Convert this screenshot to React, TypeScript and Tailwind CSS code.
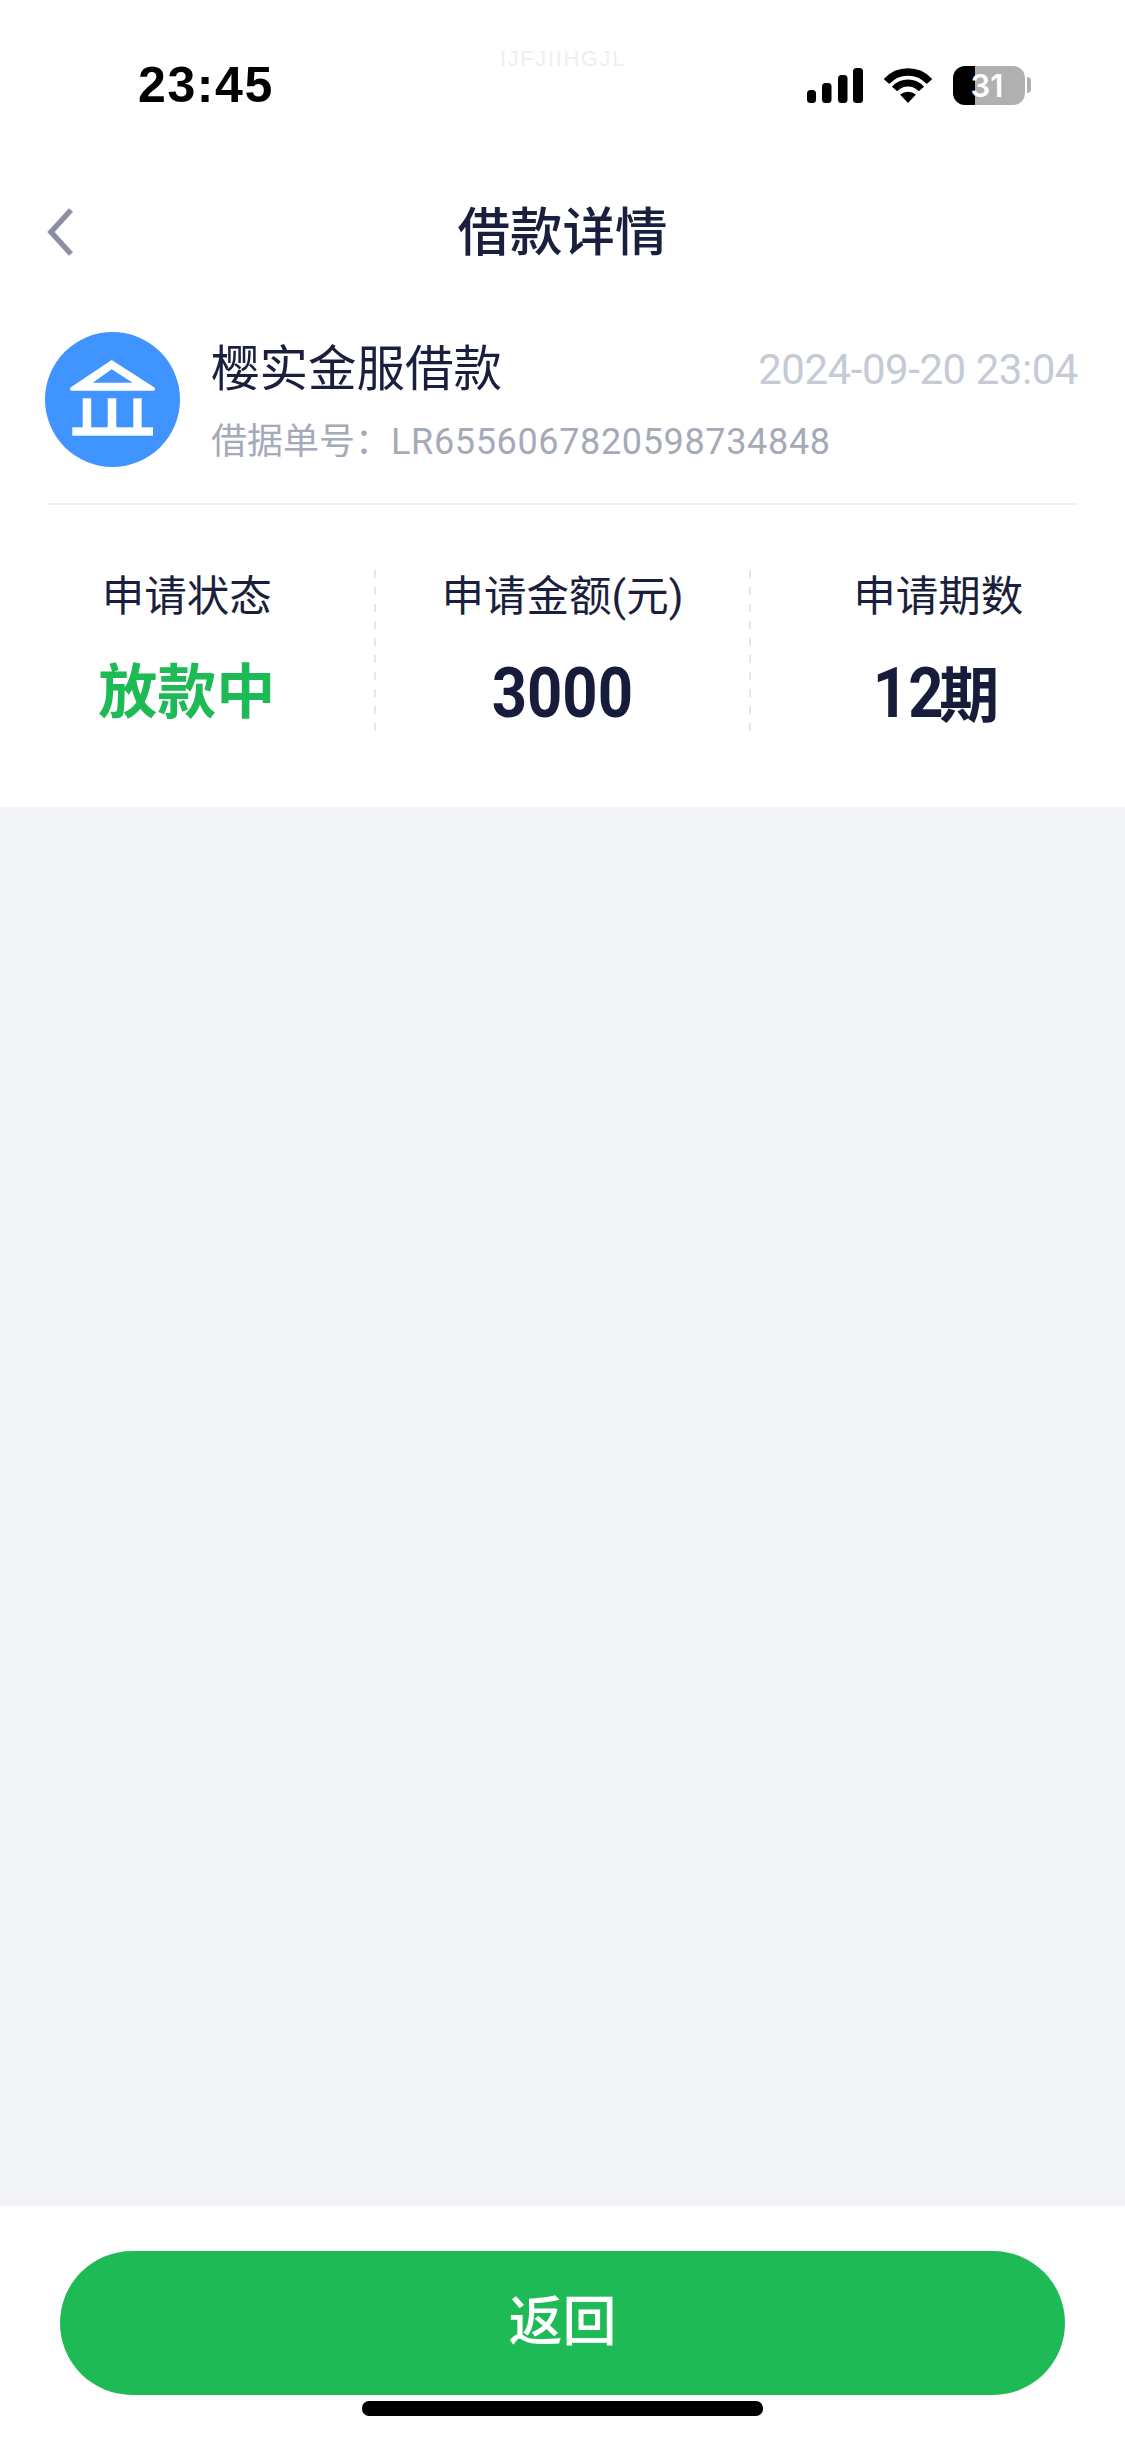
export default function App() {
  return (
    <div className="flex h-[2439px] w-[1125px] flex-col overflow-hidden bg-white font-['Roboto','Noto_Sans_CJK_SC',sans-serif] text-[#1a1f3d]">
      <div className="relative flex h-[170px] shrink-0 items-center justify-between pl-[138px] pr-[94px] text-black">
        <span className="-mt-[1px] font-['Liberation_Sans',sans-serif] text-[50px] font-bold leading-none tracking-[1.6px]">23:45</span>
        <span className="absolute left-[500px] top-[48px] font-['Liberation_Sans',sans-serif] text-[22px] leading-[22px] tracking-[1.6px] text-[#efefef]">IJFJIIHGJL</span>
        <div className="flex items-center">
          <svg width="56" height="35" viewBox="0 0 56 35" fill="#000">
            <rect x="0" y="22" width="9" height="13" rx="3.5" />
            <rect x="15" y="15" width="9.5" height="20" rx="3.5" />
            <rect x="31" y="7" width="9.5" height="28" rx="3.5" />
            <rect x="46" y="0" width="10" height="35" rx="3.5" />
          </svg>
          <svg className="ml-[21px]" width="48" height="35" viewBox="0 0 48 35" fill="none">
            <path d="M2.5 13.6A29 29 0 0 1 45.5 13.6" stroke="#000" strokeWidth="7.5" />
            <path d="M10.6 21A18 18 0 0 1 37.4 21" stroke="#000" strokeWidth="7" />
            <path d="M24 35L16 26.5Q24 21 32 26.5Z" fill="#000" />
          </svg>
          <div className="ml-[21px] flex h-[39px] w-[72px] items-center justify-center overflow-hidden rounded-[12px] bg-[linear-gradient(to_right,#000_0_22px,#b0b0b0_22px)] pr-[4px] font-['Inter',sans-serif] text-[31px] font-semibold leading-none text-white">
            31
          </div>
          <div className="ml-[2px] h-[16px] w-[4px] rounded-r-full bg-[#b0b0b0]" />
        </div>
      </div>

      <div className="grid h-[124px] shrink-0 grid-cols-[1fr_auto_1fr] items-center">
        <svg className="ml-[44px]" width="32" height="50" viewBox="0 0 32 50" fill="none">
          <path d="M27 3L7 25L27 47" stroke="#8a8fa3" strokeWidth="5.5" />
        </svg>
        <h1 className="pt-[3px] text-[52.5px] font-medium leading-none">借款详情</h1>
      </div>

      <div className="flex shrink-0 gap-[31px] pl-[45px] pr-[47px] pt-[38px]">
        <div className="h-[135px] w-[135px] shrink-0 rounded-full bg-[#4094ff]">
          <svg width="135" height="135" viewBox="0 0 135 135" fill="#fff">
            <path fillRule="evenodd" d="M66.7 28L109.5 55.5Q111 58.7 108 58.7H27Q24 58.7 25.5 55.5ZM66.7 37.3L47.7 50.7H87.7Z" />
            <rect x="37.7" y="66.3" width="8.5" height="30" />
            <rect x="62.7" y="66.3" width="8.6" height="30" />
            <rect x="88.3" y="66.3" width="8.4" height="30" />
            <rect x="27.3" y="95.3" width="80.7" height="8.4" />
          </svg>
        </div>
        <div className="min-w-0 flex-1">
          <div className="flex h-[76px] items-center justify-between">
            <span className="text-[48.5px] leading-none">樱实金服借款</span>
            <span className="text-[42px] leading-none tracking-[-0.45px] text-[#c5cad6]">2024-09-20 23:04</span>
          </div>
          <div className="h-[68px] text-[36px] leading-[68px] text-[#a5aab8]">
            借据单号：<span className="tracking-[0.65px]">LR6556067820598734848</span>
          </div>
        </div>
      </div>

      <div className="mx-[48px] mt-[27px] h-[2px] shrink-0 bg-[#eeeff2]" />

      <div className="flex h-[302px] shrink-0 items-start pt-[65px]">
        <Stat label="申请状态" valueClass="text-[59px] font-semibold text-[#1dba55]">
          放款中
        </Stat>
        <Dash />
        <Stat label="申请金额(元)" valueClass="font-bold text-[#171c3b]">
          <Narrow>3000</Narrow>
        </Stat>
        <Dash />
        <Stat label="申请期数" valueClass="pr-[9px] text-[60px] font-bold text-[#171c3b]">
          <span className="-mr-[9px]">
            <Narrow>12</Narrow>
          </span>
          期
        </Stat>
      </div>

      <div className="flex-1 bg-[#f3f4f8]" />

      <div className="h-[233px] shrink-0 bg-white pt-[45px]">
        <button className="mx-[60px] flex h-[144px] w-[1005px] items-center justify-center rounded-full bg-[#1eba56] text-[54px] font-medium leading-none text-white">
          返回
        </button>
        <div className="mx-auto mt-[6px] h-[15px] w-[401px] rounded-[7px] bg-black" />
      </div>
    </div>
  );
}

function Narrow({ children }: { children: string }) {
  return <span className="inline-block origin-center scale-x-[0.88] align-baseline text-[70px]">{children}</span>;
}

function Dash() {
  return <div className="h-[163px] w-[2px] shrink-0 bg-[repeating-linear-gradient(to_bottom,#e6e7eb_0_8px,transparent_8px_17px)]" />;
}

function Stat({ label, valueClass, children }: { label: string; valueClass: string; children: React.ReactNode }) {
  return (
    <div className="flex h-[163px] flex-1 flex-col items-center">
      <div className="mt-[7px] text-[42.5px] leading-[40px]">{label}</div>
      <div className={"mt-[46px] flex h-[60px] items-baseline leading-[60px] " + valueClass}>{children}</div>
    </div>
  );
}
